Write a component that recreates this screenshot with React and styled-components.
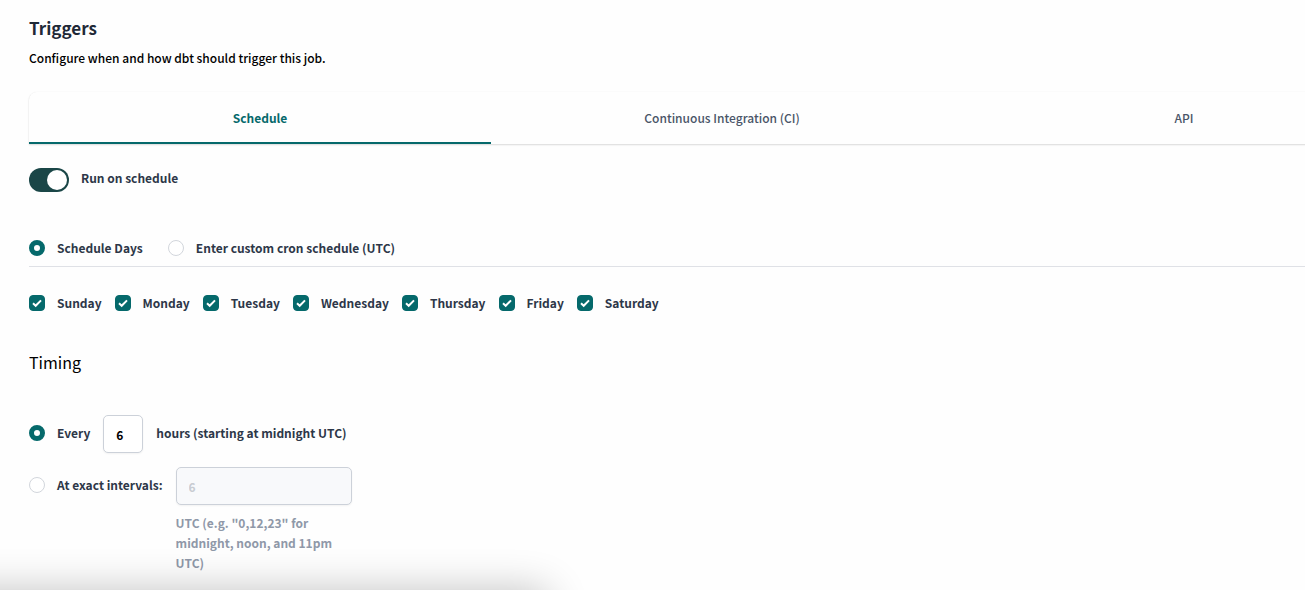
import React, { useState } from "react";
import styled, { createGlobalStyle } from "styled-components";

const teal = "#05696b";
const ink = "#2d3748";

const GlobalStyle = createGlobalStyle`
  *, *::before, *::after { box-sizing: border-box; }
  body {
    margin: 0;
    background: #fefefe;
    color: #000;
    font-family: "Noto Sans CJK SC", "Open Sans", sans-serif;
    font-size: 12px;
    line-height: 20px;
    overflow: hidden;
  }
  button, input { font: inherit; }
`;

const Page = styled.main`
  margin-right: -110px;
  padding: 16px 0 16px 29px;
`;

const Title = styled.h1`
  margin: 0 0 8px;
  font-size: 17px;
  line-height: 24px;
  font-weight: 700;
  color: #1f2937;
`;

const Intro = styled.p`
  margin: 0 0 24px;
  font-weight: 500;
`;

const TabList = styled.div`
  display: grid;
  grid-template-columns: repeat(3, 1fr);
  border-radius: 8px 8px 0 0;
  box-shadow: 0 0 1px rgba(0, 0, 0, 0.08), 0 1px 2px rgba(0, 0, 0, 0.14);
`;

const Tab = styled.button`
  height: 52px;
  padding: 2px 16px 0;
  border: 0;
  border-bottom: 2px solid ${(p) => (p.$active ? teal : "transparent")};
  background: none;
  color: ${(p) => (p.$active ? teal : "#4a5568")};
  font-weight: ${(p) => (p.$active ? 700 : 500)};
  cursor: pointer;
`;

const SwitchRow = styled.label`
  display: flex;
  align-items: flex-start;
  gap: 12px;
  margin-top: 24px;
  color: ${ink};
  font-weight: 700;
`;

const Switch = styled.input`
  appearance: none;
  display: flex;
  width: 40px;
  height: 24px;
  margin: 0;
  padding: 2px;
  border-radius: 12px;
  background: #1a4647;
  &::before {
    content: "";
    width: 20px;
    height: 20px;
    margin-left: auto;
    border-radius: 50%;
    background: #fff;
  }
  &:not(:checked) { background: #a0aec0; }
  &:not(:checked)::before { margin-left: 0; }
`;

const ModeRow = styled.div`
  display: flex;
  gap: 25px;
  margin-top: 46px;
  padding-bottom: 8px;
  border-bottom: 1px solid #dfe1e6;
`;

const DayRow = styled.div`
  display: flex;
  gap: 13px;
  margin-top: 26px;
`;

const Option = styled.label`
  display: flex;
  align-items: center;
  gap: 12px;
  color: ${ink};
  font-weight: 700;
  white-space: nowrap;
`;

const Radio = styled.input`
  appearance: none;
  flex: none;
  width: 16px;
  height: 16px;
  margin: 0;
  border: 1px solid #d2d6dc;
  border-radius: 50%;
  background: #fff;
  &:checked { border: 5px solid ${teal}; }
`;

const CheckFrame = styled.span`
  display: grid;
  flex: none;
  width: 16px;
  height: 16px;
  > * { grid-area: 1 / 1; }
`;

const CheckInput = styled.input`
  appearance: none;
  width: 16px;
  height: 16px;
  margin: 0;
  border: 1px solid #d2d6dc;
  border-radius: 4px;
  background: #fff;
  &:checked { border-color: ${teal}; background: ${teal}; }
  &:not(:checked) + svg { visibility: hidden; }
`;

const CheckMark = styled.svg`
  width: 16px;
  height: 16px;
  pointer-events: none;
`;

const SectionTitle = styled.h2`
  margin: 37px 0 41px;
  font-size: 16px;
  line-height: 24px;
  font-weight: 400;
`;

const TimingRow = styled.div`
  display: flex;
  align-items: flex-start;
  gap: 13px;
  margin-bottom: 14px;
`;

const TimingOption = styled(Option)`
  height: 36px;
`;

const TextField = styled.input`
  display: block;
  width: ${(p) => (p.$wide ? 176 : 40)}px;
  height: 38px;
  padding: 0 12px;
  border: 1px solid #ccd1d9;
  border-radius: 5px;
  background: #fff;
  box-shadow: 0 1px 2px rgba(0, 0, 0, 0.05);
  color: #000;
  font-weight: 700;
  &:disabled { background: #f8f9fb; color: #c8ccd2; }
`;

const Field = styled.div`
  width: 176px;
`;

const Help = styled.p`
  margin: 8px 0 0;
  color: #8f98a8;
  font-weight: 700;
`;

const DockedPanel = styled.div`
  position: fixed;
  top: 100%;
  left: -60px;
  width: 608px;
  height: 80px;
  border-radius: 8px;
  box-shadow: 0 0 40px rgba(0, 0, 0, 0.24);
`;

const tabs = ["Schedule", "Continuous Integration (CI)", "API"];
const days = ["Sunday", "Monday", "Tuesday", "Wednesday", "Thursday", "Friday", "Saturday"];

function DayCheckbox({ name }) {
  return (
    <Option>
      <CheckFrame>
        <CheckInput type="checkbox" defaultChecked />
        <CheckMark viewBox="0 0 16 16" fill="none" stroke="#fff" strokeWidth="2" aria-hidden="true">
          <path d="M4 8.3 6.7 10.8 12 5.4" />
        </CheckMark>
      </CheckFrame>
      {name}
    </Option>
  );
}

export default function App() {
  const [active, setActive] = useState("Schedule");
  return (
    <>
      <GlobalStyle />
      <Page>
        <Title>Triggers</Title>
        <Intro>Configure when and how dbt should trigger this job.</Intro>
        <TabList role="tablist">
          {tabs.map((t) => (
            <Tab key={t} role="tab" aria-selected={t === active} $active={t === active} onClick={() => setActive(t)}>
              {t}
            </Tab>
          ))}
        </TabList>
        <SwitchRow>
          <Switch type="checkbox" role="switch" defaultChecked />
          Run on schedule
        </SwitchRow>
        <ModeRow>
          <Option>
            <Radio type="radio" name="mode" defaultChecked />
            Schedule Days
          </Option>
          <Option>
            <Radio type="radio" name="mode" />
            Enter custom cron schedule (UTC)
          </Option>
        </ModeRow>
        <DayRow>
          {days.map((d) => (
            <DayCheckbox key={d} name={d} />
          ))}
        </DayRow>
        <SectionTitle>Timing</SectionTitle>
        <TimingRow>
          <TimingOption>
            <Radio type="radio" name="timing" defaultChecked />
            Every
          </TimingOption>
          <TextField id="hours" type="text" defaultValue="6" />
          <TimingOption htmlFor="hours">hours (starting at midnight UTC)</TimingOption>
        </TimingRow>
        <TimingRow>
          <TimingOption>
            <Radio type="radio" name="timing" />
            At exact intervals:
          </TimingOption>
          <Field>
            <TextField $wide type="text" defaultValue="6" disabled aria-label="Exact intervals" />
            <Help>UTC (e.g. "0,12,23" for midnight, noon, and 11pm UTC)</Help>
          </Field>
        </TimingRow>
      </Page>
      <DockedPanel aria-hidden="true" />
    </>
  );
}
